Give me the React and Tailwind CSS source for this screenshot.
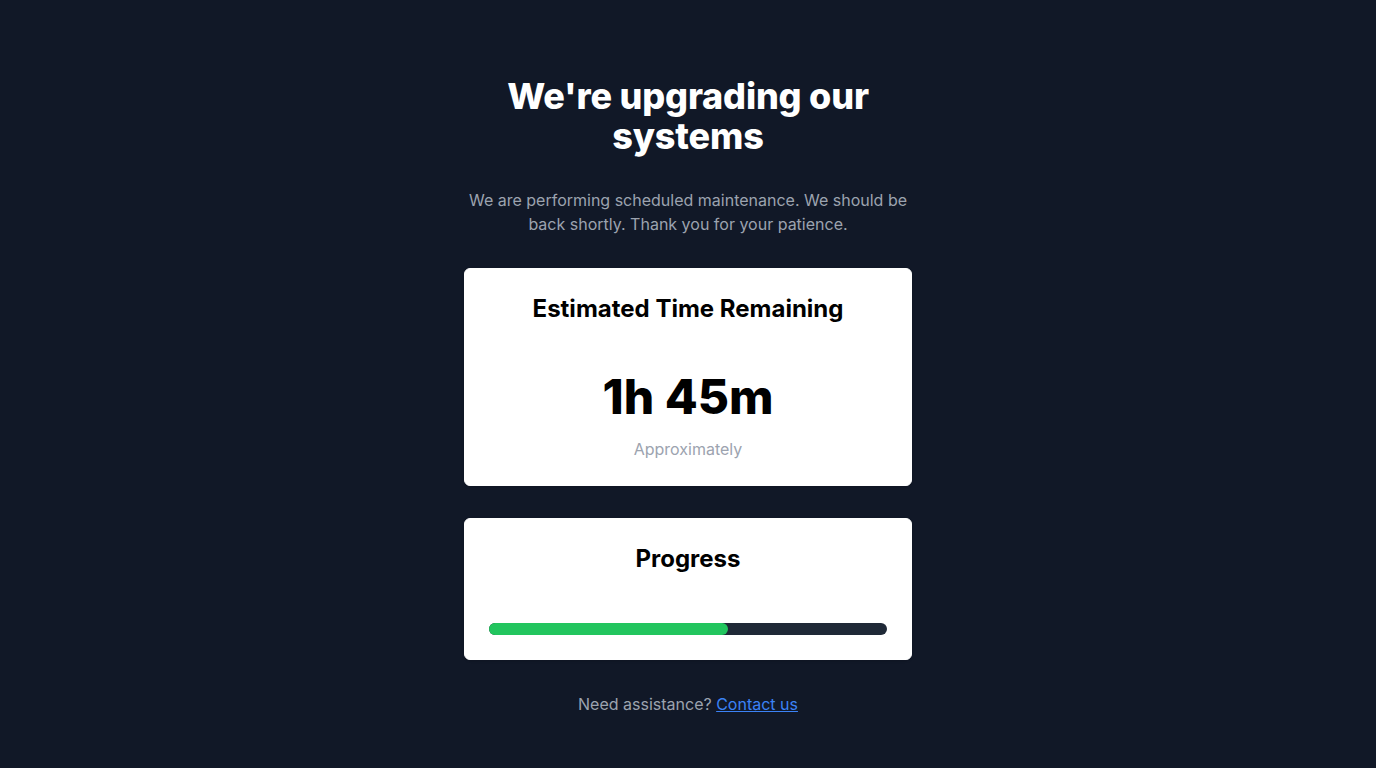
import React from 'react'

// Maintenance page: headline, ETA card, progress card and contact line
function Card({ title, children }) {
  return (
    <div className="bg-white border border-white rounded-md p-6 text-center shadow">
      <h3 className="text-2xl font-bold text-black">{title}</h3>
      {children}
    </div>
  );
}

export default function App() {
  const progress = 60;

  return (
    <div
      className="min-h-screen bg-[#111827] flex items-center justify-center px-4"
      style={{ fontFamily: 'Inter, "Noto Sans", sans-serif' }}
    >
      <div className="max-w-md w-full space-y-8">
        <h2 className="mt-6 text-center text-4xl font-extrabold tracking-[-0.005em] text-white">
          We're upgrading our systems
        </h2>
        <p className="text-center text-base text-[#9ca3af]">
          We are performing scheduled maintenance. We should be back shortly. Thank you for your patience.
        </p>

        <Card title="Estimated Time Remaining">
          <div className="mt-12 text-5xl leading-none font-extrabold text-black">1h 45m</div>
          <p className="mt-4 text-base text-[#9ca3af]">Approximately</p>
        </Card>

        <Card title="Progress">
          <div className="mt-12 h-3 w-full rounded-full bg-[#1f2937]">
            <div className="h-3 rounded-full bg-[#22c55e]" style={{ width: `${progress}%` }} />
          </div>
        </Card>

        <p className="text-center text-base text-[#9ca3af]">
          Need assistance?{' '}
          <a href="#" className="text-[#3b82f6] underline">Contact us</a>
        </p>
      </div>
    </div>
  );
}
